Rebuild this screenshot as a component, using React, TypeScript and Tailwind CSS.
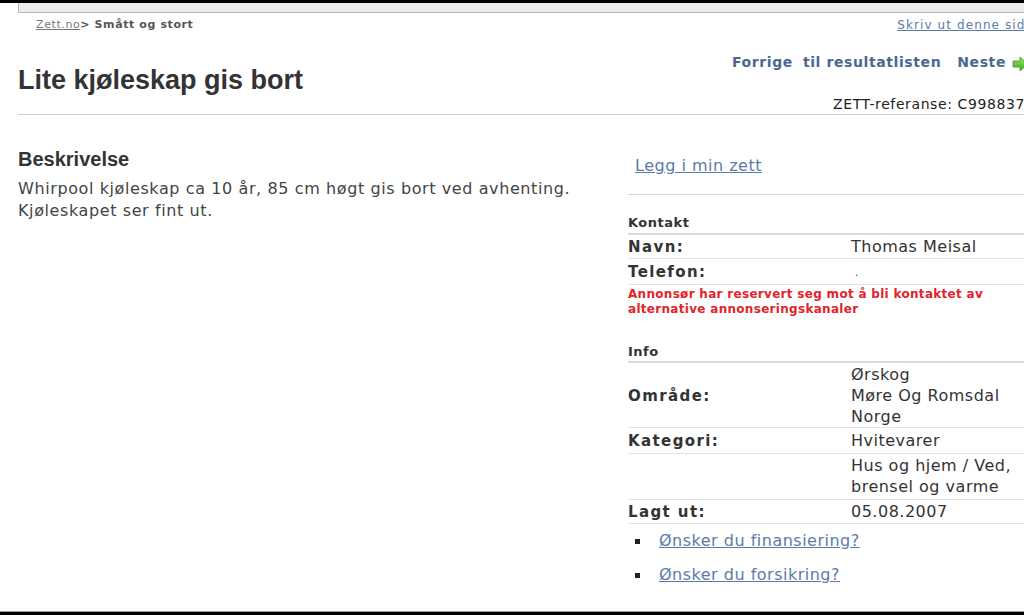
const dv = "font-['DejaVu_Sans',Verdana,sans-serif]";
const ar = "font-['Liberation_Sans',Arial,sans-serif]";

function NextArrow() {
  return (
    <svg width="18" height="16" viewBox="0 0 18 16" className="inline-block ml-[6px] -mb-[2px]">
      <defs>
        <linearGradient id="g" x1="0" y1="0" x2="0" y2="1">
          <stop offset="0" stopColor="#9be36a" />
          <stop offset="1" stopColor="#3fa81f" />
        </linearGradient>
      </defs>
      <polygon points="1,5 8,5 8,1 16,8 8,15 8,11 1,11" fill="url(#g)" stroke="#3a9a1c" strokeWidth="0.8" />
    </svg>
  );
}

function Row({ label, children, className = "" }: { label?: string; children: React.ReactNode; className?: string }) {
  return (
    <div className={`flex items-center border-b border-[#e3e3e3] ${className}`}>
      <div className="w-[223px] shrink-0 text-[15px] font-bold tracking-[1.4px] text-[#333] leading-[20px]">{label}</div>
      <div className="text-[16px] tracking-[0.5px] text-[#333] leading-[20px]">{children}</div>
    </div>
  );
}

export default function App() {
  return (
    <div className={`w-[1024px] h-[615px] overflow-hidden bg-white flex flex-col ${dv}`}>
      <div className="h-[3px] bg-black shrink-0" />
      <div className="h-[10px] ml-[18px] bg-[#ececec] border-l border-b border-[#b4b4b4] shrink-0" />

      <div className="flex-1 overflow-hidden">
        <div className="w-[1040px] pl-[18px]">
          {/* breadcrumb */}
          <div className="flex justify-between items-center mt-[5px] h-[14px] pr-[6px]">
            <div className="pl-[18px] text-[11px] leading-[14px] text-[#555] tracking-[0.6px]">
              <span className="underline text-[#777]">Zett.no</span>
              <span className="font-bold">&gt; Smått og stort</span>
            </div>
            <a className="text-[12px] leading-[14px] text-[#5a7ca6] underline tracking-[1.1px]">Skriv ut denne side</a>
          </div>

          {/* header */}
          <div className="flex justify-between items-start border-b border-[#cfcfcf] pb-[2px]">
            <h1 className={`${ar} mt-[33px] text-[27px] leading-[30px] font-bold text-[#333]`}>Lite kjøleskap gis bort</h1>
            <div className="flex flex-col items-end pr-[10px]">
              <div className="mt-[21px] h-[18px] text-[14px] leading-[18px] font-bold tracking-[0.6px] text-[#4a6892] whitespace-nowrap">
                <span>Forrige</span>
                <span className="ml-[10px]">til resultatlisten</span>
                <span className="ml-[16px]">Neste</span>
                <NextArrow />
              </div>
              <div className="mt-[25px] pr-[5px] text-[14px] leading-[16px] text-[#222] tracking-[0.6px]">ZETT-referanse: C998837</div>
            </div>
          </div>

          {/* body */}
          <div className="flex">
            <div className="w-[610px] shrink-0 pt-[33px]">
              <h2 className={`${ar} text-[20px] leading-[22px] font-bold text-[#333]`}>Beskrivelse</h2>
              <p className="mt-[8px] text-[16px] leading-[22px] tracking-[0.6px] text-[#444]">
                Whirpool kjøleskap ca 10 år, 85 cm høgt gis bort ved avhenting.
                <br />
                Kjøleskapet ser fint ut.
              </p>
            </div>

            <div className="flex-1 pt-[41px]">
              <div className="pb-[18px] border-b border-[#d6d6d6] text-[16px] leading-[20px]">
                <a className="ml-[7px] text-[#5a7ca6] underline tracking-[0.5px]">Legg i min zett</a>
              </div>

              <div className="mt-[20px] pb-[2px] border-b-2 border-[#dcdcdc] text-[13px] leading-[16px] font-bold tracking-[0.5px] text-[#333]">Kontakt</div>
              <Row label="Navn:" className="pt-[2px] pb-[1px]">
                Thomas Meisal
              </Row>
              <Row label="Telefon:" className="pt-[2px] pb-[1px]">
                <span className="pl-[4px] text-[10px]">.</span>
              </Row>
              <p className="mt-[2px] text-[12px] leading-[15px] font-bold text-[#e3242b] tracking-[0.3px]">
                Annonsør har reservert seg mot å bli kontaktet av
                <br />
                alternative annonseringskanaler
              </p>

              <div className="mt-[27px] pb-[1px] border-b-2 border-[#dcdcdc] text-[13px] leading-[16px] font-bold tracking-[0.5px] text-[#333]">Info</div>
              <Row label="Område:" className="pt-[1px]">
                <div className="leading-[21px]">
                  Ørskog
                  <br />
                  Møre Og Romsdal
                  <br />
                  Norge
                </div>
              </Row>
              <Row label="Kategori:" className="pt-[3px] pb-[2px]">
                Hvitevarer
              </Row>
              <Row className="pt-[1px] pb-[2px]">
                <div className="leading-[21px]">
                  Hus og hjem / Ved,
                  <br />
                  brensel og varme
                </div>
              </Row>
              <Row label="Lagt ut:" className="pt-[2px] pb-[1px]">
                05.08.2007
              </Row>

              <ul className="mt-[7px] flex flex-col gap-[14px]">
                {["Ønsker du finansiering?", "Ønsker du forsikring?"].map((t) => (
                  <li key={t} className="flex items-center h-[20px]">
                    <span className="ml-[7px] w-[5px] h-[5px] bg-[#222] shrink-0" />
                    <a className="ml-[19px] text-[16px] leading-[20px] tracking-[0.5px] text-[#5a7ca6] underline">{t}</a>
                  </li>
                ))}
              </ul>
            </div>
          </div>
        </div>
      </div>

      <div className="h-[1px] bg-[#9a9a9a] shrink-0" />
      <div className="h-[3px] bg-black shrink-0" />
    </div>
  );
}
